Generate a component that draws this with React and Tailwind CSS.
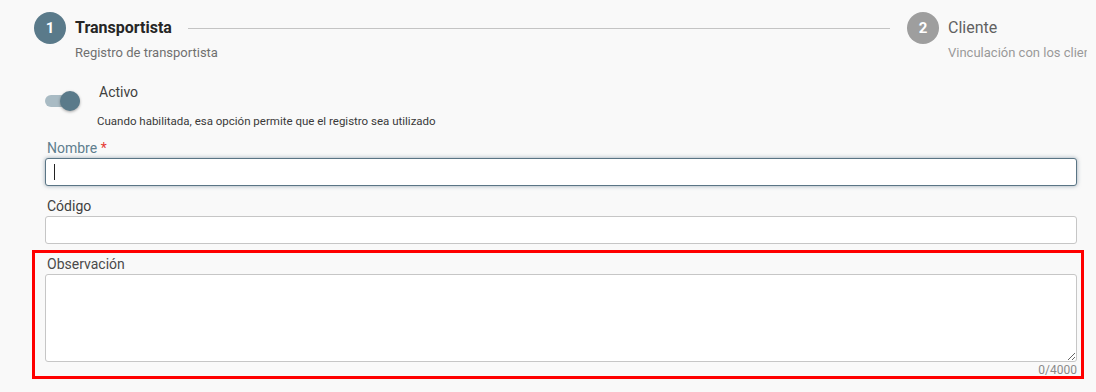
import React from "react";

const Step = ({ n, title, subtitle, active }) => (
  <div className="flex items-start gap-[9px] shrink-0">
    <div
      className={
        "w-8 h-8 rounded-full flex items-center justify-center text-white text-[15px] font-bold " +
        (active ? "bg-[#5a7a8a]" : "bg-[#9e9e9e]")
      }
    >
      {n}
    </div>
    <div className="flex flex-col">
      <span
        className={
          "h-8 leading-8 text-base " +
          (active ? "font-bold text-[#262626]" : "text-[#616161]")
        }
      >
        {title}
      </span>
      {/* subtitle may run wider than the title without pushing the connector line */}
      <div className="w-0">
        <span
          className={
            "block mt-[1px] text-[13px] leading-4 " +
            (active ? "text-[#707070]" : "text-[#9a9a9a]")
          }
        >
          {subtitle}
        </span>
      </div>
    </div>
  </div>
);

const Toggle = () => (
  <div className="relative w-[36px] h-5 mt-[9px] shrink-0">
    <div className="absolute left-0 top-1 h-3 w-[35px] rounded-full bg-[#a9bbc4]" />
    <div className="absolute left-[15px] top-0 w-5 h-5 rounded-full bg-[#5a7a8a] shadow-[0_1px_3px_rgba(0,0,0,0.35)]" />
  </div>
);

export default function App() {
  return (
    <div
      className="w-full h-[392px] overflow-hidden bg-[#f9f9f9] whitespace-nowrap"
      style={{ fontFamily: "Roboto, 'Liberation Sans', sans-serif" }}
    >
      <div className="flex items-start pt-3 pl-[34px] pr-[9px]">
        <Step n="1" title="Transportista" subtitle="Registro de transportista" active />
        <div className="flex-1 h-px bg-[#c4c4c4] mt-4 ml-4 mr-[17px]" />
        <div className="w-[180px] shrink-0 overflow-hidden">
          <Step n="2" title="Cliente" subtitle="Vinculación con los clientes" />
        </div>
      </div>

      <div className="pl-[45px] pr-[19px]">
        <div className="flex items-start mt-[21px]">
          <Toggle />
          <span className="ml-[18px] text-sm leading-5 text-[#404040]">Activo</span>
        </div>
        <div className="ml-[52px] mt-[3px] text-[11.5px] leading-[14px] text-[#3a3a3a]">
          Cuando habilitada, esa opción permite que el registro sea utilizado
        </div>

        <label className="block mt-[10px] pl-[2px] text-sm leading-5 text-[#5f7e8e]">
          Nombre <span className="text-[#e53935]">*</span>
        </label>
        <div className="h-[28px] rounded-[3px] border border-[#5a7585] bg-white shadow-[0_0_4px_rgba(90,117,133,0.6)] flex items-center pl-[8px]">
          <div className="w-px h-[16px] bg-[#222]" />
        </div>

        <label className="block mt-[10px] pl-[2px] text-sm leading-5 text-[#3f3f3f]">Código</label>
        <input className="block w-full h-[28px] rounded-[3px] border border-[#c6c6c6] bg-white outline-none" />

        <div className="relative mt-[10px]">
          <div className="absolute -top-[4px] -left-[13px] -right-[7px] -bottom-[1px] border-[3px] border-[#ff0000] pointer-events-none" />
          <label className="block pl-[2px] text-sm leading-5 text-[#4a4a4a]">Observación</label>
          <textarea className="block w-full h-[88px] rounded-[3px] border border-[#c6c6c6] bg-white outline-none" />
          <div className="text-right text-xs leading-4 text-[#8a8a8a]">0/4000</div>
        </div>
      </div>
    </div>
  );
}
